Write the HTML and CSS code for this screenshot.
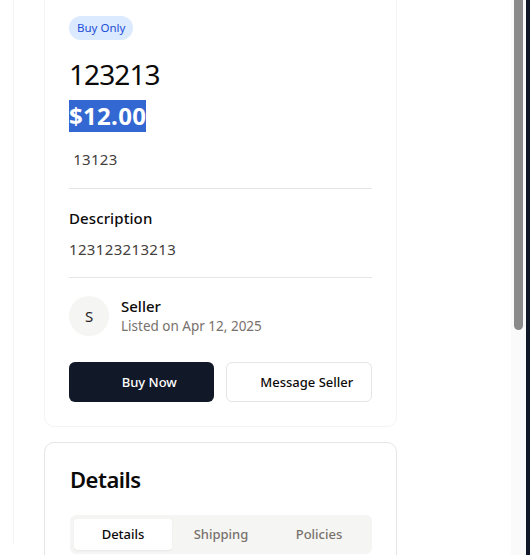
FILE: index.html
```html
<!DOCTYPE html>
<html lang="en">
<head>
<meta charset="utf-8">
<title>Listing</title>
<link rel="stylesheet" href="styles.css">
</head>
<body>
<div class="frame">
  <div class="main">
    <div class="panel">
      <section class="card product">
        <span class="badge">Buy Only</span>
        <h1 class="title">123213</h1>
        <div class="price"><span class="sel">$12.00</span></div>
        <p class="sub">&nbsp;13123</p>
        <hr class="divider">
        <h2 class="section-title">Description</h2>
        <p class="desc">123123213213</p>
        <hr class="divider">
        <div class="seller">
          <div class="avatar">S</div>
          <div class="seller-info">
            <div class="seller-name">Seller</div>
            <div class="seller-date">Listed on Apr 12, 2025</div>
          </div>
        </div>
        <div class="actions">
          <button class="btn btn-primary"><span class="btn-icon"></span>Buy Now</button>
          <button class="btn btn-outline"><span class="btn-icon"></span>Message Seller</button>
        </div>
      </section>
      <section class="card details">
        <h2 class="details-title">Details</h2>
        <div class="tabs">
          <div class="tab active">Details</div>
          <div class="tab">Shipping</div>
          <div class="tab">Policies</div>
        </div>
      </section>
    </div>
  </div>
  <div class="scrollbar"><div class="thumb"></div></div>
  <div class="edge"></div>
</div>
</body>
</html>
```

FILE: styles.css
```css
* { box-sizing: border-box; }
html, body { margin: 0; padding: 0; }
body {
  font-family: "Noto Sans", "Open Sans", sans-serif;
  color: #0c0a09;
  background: #fff;
  overflow: hidden;
}
.frame {
  display: flex;
  height: 555px;
  overflow: hidden;
}
.main {
  flex: 1;
  padding-left: 13px;
}
.panel {
  height: 100%;
  border-left: 1px solid #f6f6f6;
  padding-left: 30px;
}
.card {
  width: 353px;
  background: #fff;
  border-radius: 10px;
}
.product {
  margin-top: -11px;
  padding: 25px 24px 24px;
  border: 1px solid #f3f3f3;
}
.badge {
  display: inline-block;
  height: 24px;
  line-height: 24px;
  padding: 0 8px;
  border-radius: 12px;
  background: #dbeafe;
  color: #1d4ed8;
  font-size: 11.5px;
}
.title {
  margin: 16px 0 0;
  font-size: 28px;
  line-height: 36px;
  font-weight: 400;
  letter-spacing: -0.9px;
}
.price {
  margin-top: 8px;
  height: 32px;
}
.sel {
  display: inline-block;
  background: #3367d1;
  color: #fff;
  font-size: 24px;
  line-height: 32px;
  font-weight: 700;
  letter-spacing: 0.3px;
}
.sub {
  margin: 16px 0 0;
  font-size: 15px;
  line-height: 22px;
  color: #44403c;
  letter-spacing: 0.3px;
}
.divider {
  border: 0;
  border-top: 1px solid #e7e5e4;
  margin: 18px 0 16px;
}
.section-title {
  margin: 0;
  padding-top: 1px;
  font-size: 15px;
  line-height: 24px;
  font-weight: 500;
  letter-spacing: 0.1px;
}
.desc {
  margin: 8px 0 0;
  font-size: 15px;
  line-height: 22px;
  color: #44403c;
  letter-spacing: 0.35px;
}
.desc + .divider {
  margin-top: 17px;
}
.seller {
  display: flex;
  align-items: center;
  gap: 12px;
  margin-top: 18px;
}
.avatar {
  width: 40px;
  height: 40px;
  border-radius: 50%;
  background: #f5f5f4;
  display: flex;
  align-items: center;
  justify-content: center;
  font-size: 15px;
  color: #292524;
}
.seller-name {
  font-size: 15px;
  line-height: 20px;
  font-weight: 500;
}
.seller-date {
  font-size: 13.5px;
  line-height: 20px;
  color: #78716c;
}
.actions {
  display: flex;
  gap: 12px;
  margin-top: 26px;
}
.btn {
  flex: 1;
  height: 40px;
  border-radius: 6px;
  font-family: inherit;
  font-size: 13px;
  font-weight: 500;
  cursor: pointer;
  display: flex;
  align-items: center;
  justify-content: center;
}
.btn-icon {
  display: inline-block;
  width: 16px;
  height: 16px;
}
.btn-primary {
  background: #111827;
  color: #fff;
  border: 0;
}
.btn-outline {
  background: #fff;
  color: #0c0a09;
  border: 1px solid #e7e5e4;
}
.details {
  margin-top: 15px;
  padding: 20px 24px 24px 25px;
  border: 1px solid #e7e5e4;
}
.details-title {
  margin: 0;
  font-size: 22px;
  line-height: 32px;
  font-weight: 600;
  letter-spacing: -0.5px;
}
.tabs {
  margin-top: 20px;
  display: grid;
  grid-template-columns: repeat(3, 1fr);
  padding: 4px;
  background: #f5f5f4;
  border-radius: 6px;
}
.tab {
  height: 31px;
  line-height: 31px;
  text-align: center;
  font-size: 13px;
  font-weight: 500;
  color: #78716c;
  border-radius: 4px;
}
.tab.active {
  background: #fff;
  color: #0c0a09;
  box-shadow: 0 1px 2px rgba(0,0,0,0.06);
}
.scrollbar {
  width: 15px;
  padding: 0 3px;
  background: #fafafa;
}
.thumb {
  height: 330px;
  background: #8a8a8a;
  border-radius: 0 0 5px 5px;
}
.edge {
  width: 4px;
  background: #0f1729;
}
```
